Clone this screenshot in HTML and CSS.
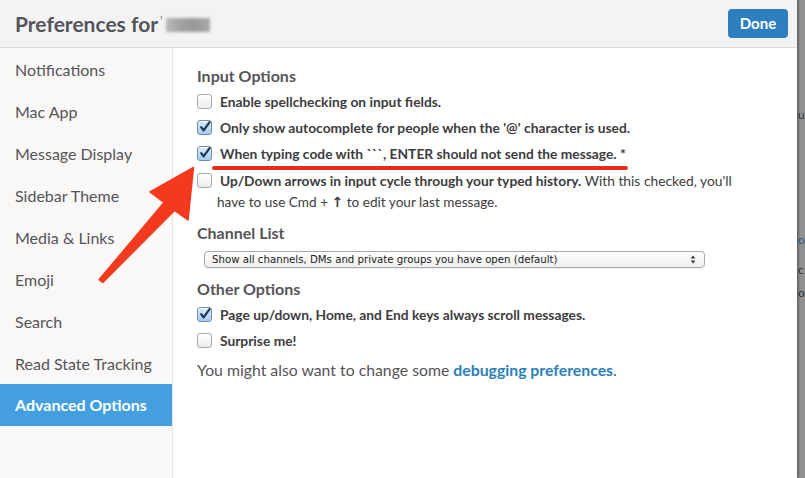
FILE: index.html
```html
<!DOCTYPE html>
<html>
<head>
<meta charset="utf-8">
<link rel="stylesheet" href="styles.css">
</head>
<body>
<div class="screen">
  <div class="modal">
    <div class="header">
      <div class="title">Preferences for <span class="tick">'</span><span class="blurred"></span></div>
      <button class="done">Done</button>
    </div>
    <div class="body">
      <div class="sidebar">
        <div class="nav">Notifications</div>
        <div class="nav">Mac App</div>
        <div class="nav">Message Display</div>
        <div class="nav">Sidebar Theme</div>
        <div class="nav">Media &amp; Links</div>
        <div class="nav">Emoji</div>
        <div class="nav">Search</div>
        <div class="nav">Read State Tracking</div>
        <div class="nav active">Advanced Options</div>
      </div>
      <div class="content">
        <h3 class="heading">Input Options</h3>
        <div class="row"><span class="cb"></span><span class="lbl">Enable spellchecking on input fields.</span></div>
        <div class="row"><span class="cb on"><svg viewBox="0 0 14 14"><path d="M3.2 7.2 L5.6 10.4 L11.6 2.2" fill="none" stroke="#1d3554" stroke-width="2.2" stroke-linecap="round" stroke-linejoin="round"/></svg></span><span class="lbl">Only show autocomplete for people when the '@' character is used.</span></div>
        <div class="row"><span class="cb on"><svg viewBox="0 0 14 14"><path d="M3.2 7.2 L5.6 10.4 L11.6 2.2" fill="none" stroke="#1d3554" stroke-width="2.2" stroke-linecap="round" stroke-linejoin="round"/></svg></span><span class="lbl">When typing code with ```, ENTER should not send the message. *</span></div>
        <div class="row two"><span class="cb"></span><span class="lbl">Up/Down arrows in input cycle through your typed history. <span class="plain">With this checked, you'll</span></span></div>
        <div class="sub">have to use Cmd + <b class="up">↑</b> to edit your last message.</div>

        <h3 class="heading h-channel">Channel List</h3>
        <div class="select"><span>Show all channels, DMs and private groups you have open (default)</span><svg class="updown" viewBox="0 0 6 10"><path d="M3 0.5 L5.5 3.8 H0.5Z M3 9.5 L5.5 6.2 H0.5Z" fill="#333"/></svg></div>

        <h3 class="heading h-other">Other Options</h3>
        <div class="row"><span class="cb on"><svg viewBox="0 0 14 14"><path d="M3.2 7.2 L5.6 10.4 L11.6 2.2" fill="none" stroke="#1d3554" stroke-width="2.2" stroke-linecap="round" stroke-linejoin="round"/></svg></span><span class="lbl">Page up/down, Home, and End keys always scroll messages.</span></div>
        <div class="row"><span class="cb"></span><span class="lbl">Surprise me!</span></div>

        <p class="note">You might also want to change some <a class="link">debugging preferences</a>.</p>
      </div>
    </div>
  </div>
  <div class="backdrop">
    <span class="frag f1">u</span>
    <span class="frag f2 blue">o</span>
    <span class="frag f3">c</span>
    <span class="frag f4">o</span>
  </div>

  <div class="underline"></div>
  <svg class="arrow" width="805" height="478" viewBox="0 0 805 478">
    <polygon points="193.5,167.5 150,192 164,202.5 99.2,279.6 102.8,282.4 174.5,210.5 188,220" fill="#f43a1e" stroke="#f43a1e" stroke-width="1.5" stroke-linejoin="round"/>
  </svg>
</div>
</body>
</html>
```

FILE: styles.css
```css
html, body {
  margin: 0;
  padding: 0;
  width: 805px;
  height: 478px;
  overflow: hidden;
  font-family: Lato, "Open Sans", sans-serif;
}

.screen {
  position: relative;
  display: flex;
  width: 805px;
  height: 478px;
  background: #8d8d8d;
}

.modal {
  width: 797px;
  height: 478px;
  background: #ffffff;
  display: flex;
  flex-direction: column;
  box-shadow: 1px 0 3px rgba(0,0,0,0.35);
  z-index: 1;
}

.header {
  height: 47px;
  flex: none;
  background: #f3f3f4;
  border-bottom: 1px solid #dedede;
  display: flex;
  align-items: center;
  justify-content: space-between;
  padding: 0 9px 0 15px;
}

.title {
  font-size: 21px;
  font-weight: 700;
  color: #555459;
  display: flex;
  align-items: center;
}

.tick {
  font-weight: 400;
  font-size: 14px;
  color: #888;
  margin-left: 2px;
  margin-top: -6px;
}

.blurred {
  display: inline-block;
  width: 44px;
  height: 14px;
  margin-left: 3px;
  margin-top: 3px;
  background: linear-gradient(90deg, #b9b9bb 0%, #a4a4a6 30%, #98989a 60%, #a9a9ab 100%);
  filter: blur(1.5px);
}

.done {
  width: 60px;
  height: 29px;
  border: none;
  border-radius: 4px;
  background: #2d7fbf;
  color: #fff;
  font-family: Lato, sans-serif;
  font-weight: 700;
  font-size: 15px;
  padding: 0;
  margin-top: -1px;
}

.body {
  flex: 1;
  display: flex;
}

.sidebar {
  width: 172px;
  flex: none;
  background: #f9f8f7;
  border-right: 1px solid #e3e3e3;
  padding-top: 1px;
}

.nav {
  height: 42px;
  line-height: 42px;
  padding-left: 15px;
  font-size: 16px;
  color: #555459;
}

.nav.active {
  background: #439fe0;
  color: #fff;
  font-weight: 700;
  margin-top: -1px;
}

.content {
  flex: 1;
  padding: 18px 0 0 24px;
  color: #444;
}

.heading {
  margin: 0 0 2px 0;
  font-size: 16px;
  line-height: 20px;
  font-weight: 700;
  color: #555459;
}

.h-channel { margin-top: 9px; }
.h-other { margin-top: 11px; }

.row {
  display: flex;
  align-items: center;
  height: 26px;
}

.row.two {
  height: 24px;
  padding-top: 2px;
  align-items: center;
}

.cb {
  width: 13px;
  height: 13px;
  flex: none;
  border: 1px solid #a9a9a9;
  border-radius: 3px;
  background: linear-gradient(#ffffff, #ececec);
  box-shadow: inset 0 1px 0 #fff;
  position: relative;
  margin-right: 8px;
}

.cb.on {
  border-color: #6f8fb3;
  background: linear-gradient(#dceafa, #a9cbee);
}

.cb svg {
  position: absolute;
  left: 0;
  top: -1px;
  width: 14px;
  height: 14px;
}

.lbl {
  font-size: 13.8px;
  font-weight: 700;
  color: #3d3c40;
  white-space: nowrap;
}

.plain {
  font-weight: 400;
}

.sub {
  padding-left: 20px;
  font-size: 13.6px;
  line-height: 20px;
  color: #3d3c40;
  height: 22px;
}

.up {
  font-family: "DejaVu Sans", sans-serif;
  font-size: 14px;
}

.select {
  margin: 8px 0 0 7px;
  width: 484px;
  height: 15px;
  border: 1px solid #aaa;
  border-radius: 4px;
  background: linear-gradient(#ffffff, #eeeeee);
  display: flex;
  align-items: center;
  justify-content: space-between;
  padding: 0 8px 0 7px;
  box-sizing: content-box;
  font-family: "DejaVu Sans", sans-serif;
  font-size: 10.2px;
  color: #222;
  box-shadow: 0 1px 1px rgba(0,0,0,0.08);
}

.updown {
  width: 6px;
  height: 9px;
}

.note {
  margin: 7px 0 0 0;
  font-size: 15.8px;
  line-height: 20px;
  color: #555459;
}

.link {
  color: #2a80b9;
  font-weight: 700;
}

.backdrop {
  flex: 1;
  position: relative;
  background: linear-gradient(90deg, #7e7e7e, #939393 40%, #8f8f8f);
  overflow: hidden;
  font-family: Lato, sans-serif;
  font-size: 12px;
  color: #333;
}

.frag {
  position: absolute;
  left: 1px;
}

.f1 { top: 107px; }
.f2 { top: 232px; color: #2b5d8a; }
.f3 { top: 262px; }
.f4 { top: 285px; }

.underline {
  position: absolute;
  left: 212px;
  top: 166px;
  width: 416px;
  height: 4px;
  border-radius: 2px;
  background: #ea2a1b;
  z-index: 2;
}

.arrow {
  position: absolute;
  left: 0;
  top: 0;
  z-index: 3;
  pointer-events: none;
}
```
